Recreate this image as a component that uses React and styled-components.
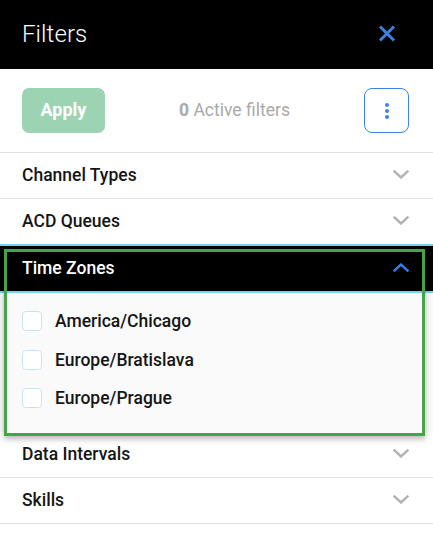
import React from "react";
import styled, { createGlobalStyle } from "styled-components";

const Global = createGlobalStyle`
  html, body { margin: 0; padding: 0; background: #fff; }
  body { font-family: Roboto, "Noto Sans", Arial, sans-serif; -webkit-font-smoothing: antialiased; }
  * { box-sizing: border-box; }
`;

const Panel = styled.div`
  width: 433px;
  background: #fff;
`;

const Header = styled.header`
  height: 69px;
  background: #000;
  display: flex;
  align-items: center;
  justify-content: space-between;
  padding: 0 24px 2px 22px;
`;

const Title = styled.h1`
  margin: 0;
  color: #fff;
  font-size: 24px;
  font-weight: 300;
  letter-spacing: 0.1px;
`;

const CloseButton = styled.button`
  width: 44px;
  height: 44px;
  display: flex;
  align-items: center;
  justify-content: center;
  background: none;
  border: none;
  padding: 0;
`;

const Actions = styled.div`
  display: flex;
  align-items: center;
  padding: 19px 24px 19px 22px;
  border-bottom: 1px solid #e2e2e2;
`;

const ApplyButton = styled.button`
  width: 83px;
  height: 45px;
  border: none;
  border-radius: 7px;
  background: #9cd4b3;
  color: #fff;
  font-family: Roboto, sans-serif;
  font-size: 18px;
  font-weight: 700;
  padding: 0 0 2px;
`;

const ActiveCount = styled.div`
  flex: 1;
  text-align: center;
  color: #a9a9a9;
  font-size: 17.5px;
  font-weight: 400;
  padding-bottom: 2px;
  b { font-weight: 700; }
`;

const KebabButton = styled.button`
  width: 45px;
  height: 45px;
  border: 1px solid #3c84ea;
  border-radius: 8px;
  background: #fff;
  display: flex;
  align-items: center;
  justify-content: center;
  padding: 0;
`;

const Row = styled.div`
  height: ${(p) => (p.$noBorder ? "45px" : "46px")};
  display: flex;
  align-items: center;
  justify-content: space-between;
  padding: 0 24px 2px 22px;
  border-bottom: ${(p) => (p.$noBorder ? "none" : "1px solid #e2e2e2")};
  background: ${(p) => (p.$dark ? "#000" : "transparent")};
`;

const RowTitle = styled.span`
  font-size: 17.5px;
  font-weight: 500;
  color: ${(p) => (p.$light ? "#fff" : "#151515")};
`;

const Section = styled.section`
  position: relative;
  border-top: 2px solid #6fd3f7;
  &::after {
    content: "";
    position: absolute;
    top: 3px;
    left: 4px;
    right: 8px;
    bottom: -4px;
    border: 3px solid #47a24a;
    box-shadow: 0 3px 6px rgba(0, 0, 0, 0.28);
    pointer-events: none;
  }
`;

const SectionHeader = styled(Row)`
  height: 47px;
  border-bottom: 2px solid #6fd3f7;
`;

const SectionBody = styled.div`
  background: #fafafa;
  padding: 18px 22px 24px;
  display: flex;
  flex-direction: column;
  gap: 18.5px;
`;

const Option = styled.label`
  display: flex;
  align-items: center;
  gap: 13px;
  height: 20px;
  font-size: 17.5px;
  font-weight: 500;
  color: #151515;
`;

const Box = styled.span`
  width: 20px;
  height: 20px;
  border: 1px solid #c8e4f2;
  border-radius: 4px;
  background: #fff;
`;

const Chevron = ({ up }) => (
  <svg width="16" height="9" viewBox="0 0 16 9">
    <path
      d={up ? "M1.5 7.5 L8 1.5 L14.5 7.5" : "M1.5 1.5 L8 7.5 L14.5 1.5"}
      fill="none"
      stroke={up ? "#2f7fe6" : "#b3b3b3"}
      strokeWidth="2.4"
      strokeLinecap="square"
    />
  </svg>
);

const XIcon = () => (
  <svg width="18" height="17" viewBox="0 0 18 17">
    <path d="M2 1.5 L16 15.5 M16 1.5 L2 15.5" stroke="#3b80e4" strokeWidth="3" fill="none" />
  </svg>
);

const Dots = () => (
  <svg width="6" height="16" viewBox="0 0 6 16">
    <circle cx="3" cy="2" r="2" fill="#3c84ea" />
    <circle cx="3" cy="8" r="2" fill="#3c84ea" />
    <circle cx="3" cy="14" r="2" fill="#3c84ea" />
  </svg>
);

export default function App() {
  return (
    <>
      <Global />
      <Panel>
        <Header>
          <Title>Filters</Title>
          <CloseButton aria-label="Close">
            <XIcon />
          </CloseButton>
        </Header>
        <Actions>
          <ApplyButton>Apply</ApplyButton>
          <ActiveCount>
            <b>0</b> Active filters
          </ActiveCount>
          <KebabButton aria-label="More">
            <Dots />
          </KebabButton>
        </Actions>
        <Row>
          <RowTitle>Channel Types</RowTitle>
          <Chevron />
        </Row>
        <Row $noBorder>
          <RowTitle>ACD Queues</RowTitle>
          <Chevron />
        </Row>
        <Section>
          <SectionHeader $dark>
            <RowTitle $light>Time Zones</RowTitle>
            <Chevron up />
          </SectionHeader>
          <SectionBody>
            {["America/Chicago", "Europe/Bratislava", "Europe/Prague"].map((z) => (
              <Option key={z}>
                <Box />
                {z}
              </Option>
            ))}
          </SectionBody>
        </Section>
        <Row>
          <RowTitle>Data Intervals</RowTitle>
          <Chevron />
        </Row>
        <Row>
          <RowTitle>Skills</RowTitle>
          <Chevron />
        </Row>
      </Panel>
    </>
  );
}
